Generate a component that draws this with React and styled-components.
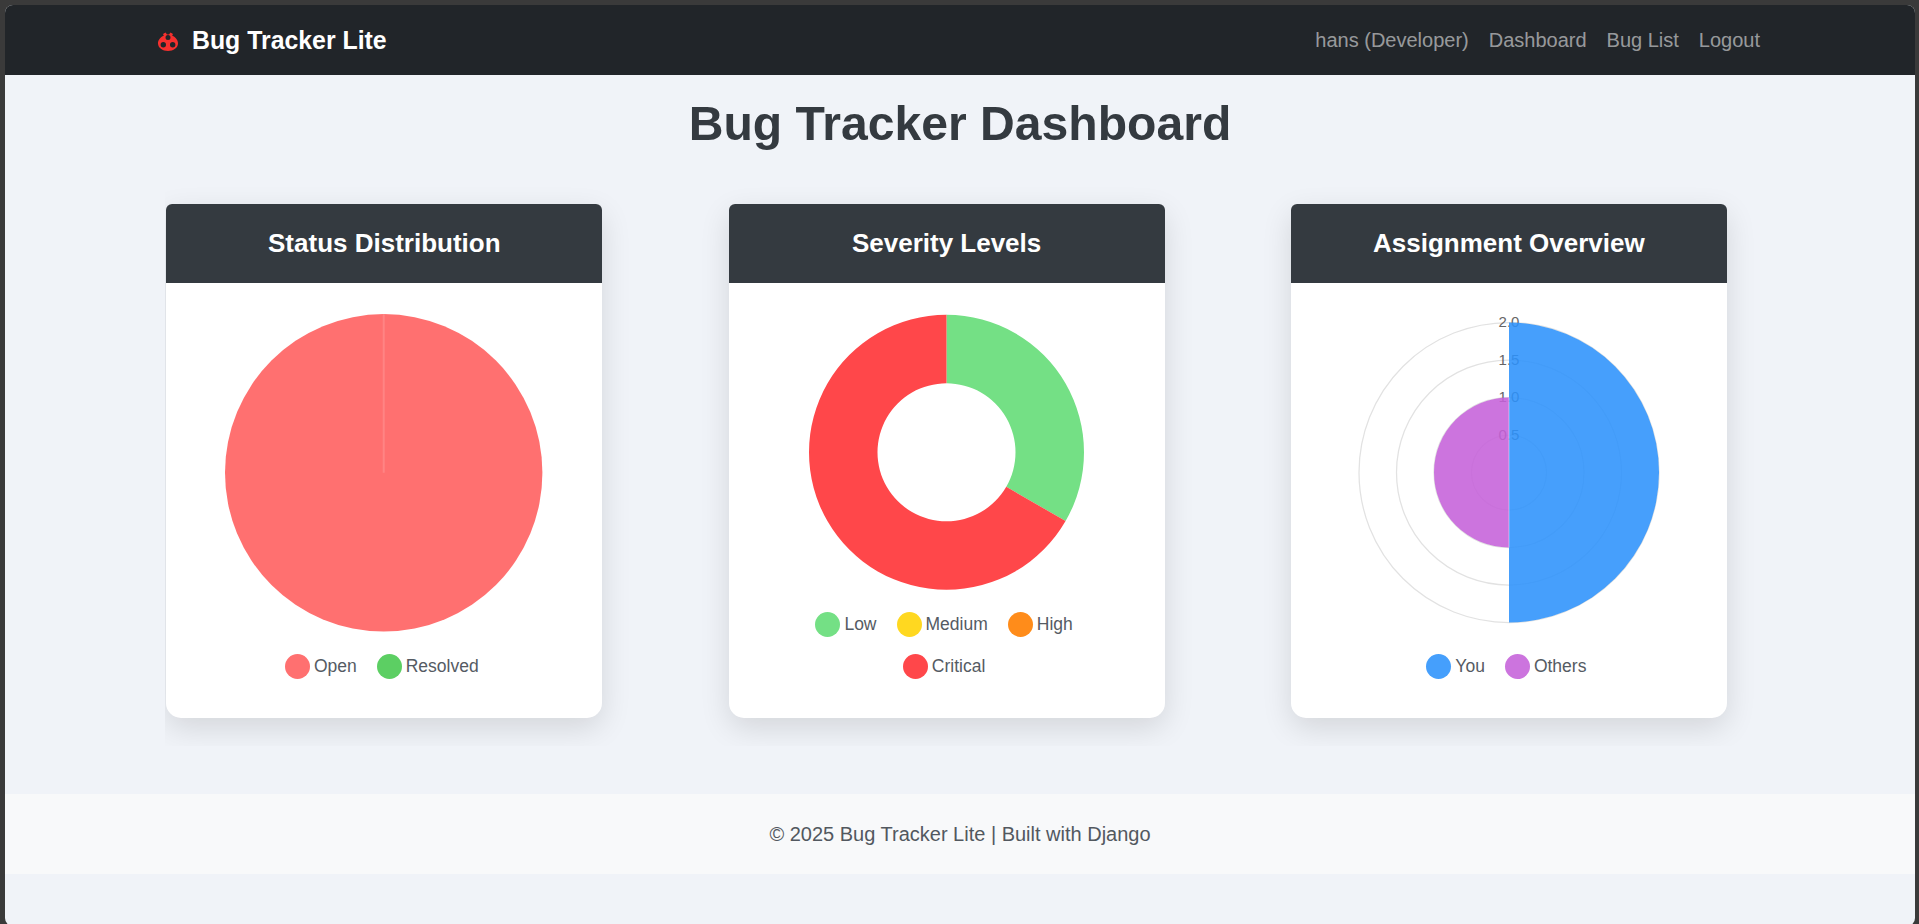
import React from "react";
import styled, { createGlobalStyle } from "styled-components";

const Global = createGlobalStyle`
  html, body { margin: 0; padding: 0; height: 100%; }
  body { background: #3a3a3a; font-family: "Liberation Sans", Arial, sans-serif; overflow: hidden; }
  #root { height: 100%; }
`;

const Frame = styled.div`
  box-sizing: border-box;
  height: 924px;
  padding: 5px 4px 0 5px;
  overflow: hidden;
`;
const Screen = styled.div`
  height: 921px;
  background: #f0f3f8;
  border-radius: 8px;
  overflow: hidden;
  display: flex;
  flex-direction: column;
`;
const Navbar = styled.nav`
  flex: none;
  height: 70px;
  background: #212529;
  display: flex;
  align-items: center;
  justify-content: space-between;
  padding: 0 155px 0 145px;
`;
const Brand = styled.a`
  display: flex;
  align-items: center;
  gap: 14px;
  padding: 1px 0 0 8px;
  color: #fff;
  font-size: 24.85px;
  font-weight: 700;
`;
const BugIcon = styled.svg`
  display: block;
  margin-top: 1px;
`;
const NavLinks = styled.div`
  display: flex;
  gap: 20px;
`;
const NavLink = styled.a`
  color: rgba(255, 255, 255, 0.55);
  font-size: 20px;
`;
const Title = styled.h1`
  margin: 0;
  padding-top: 18px;
  height: 111px;
  box-sizing: border-box;
  flex: none;
  text-align: center;
  color: #343a40;
  font-size: 48.1px;
  line-height: 60px;
  font-weight: 700;
`;
const ChartRow = styled.section`
  flex: none;
  margin: 0 0 48px 160px;
  width: 1590px;
  padding: 18px 0 26px 1.3px;
  box-sizing: border-box;
  height: 560px;
  display: flex;
  gap: 126.3px;
  overflow: hidden;
`;
const Card = styled.article`
  flex: none;
  width: 436px;
  height: 514px;
  background: #fff;
  border-radius: 6px 6px 15px 15px;
  box-shadow: 0 10px 30px rgba(0, 0, 0, 0.12);
  overflow: hidden;
`;
const CardHeader = styled.h2`
  margin: 0;
  height: 79px;
  background: #343a40;
  color: #fff;
  font-size: 26px;
  font-weight: 700;
  display: flex;
  align-items: center;
  justify-content: center;
`;
const CardBody = styled.div`
  position: relative;
  height: 435px;
`;
const ChartSvg = styled.svg`
  display: block;
  width: 436px;
  height: 435px;
`;
const Legend = styled.div`
  position: absolute;
  left: 0;
  right: 5px;
  top: ${(p) => p.$top}px;
  display: flex;
  flex-direction: column;
  align-items: center;
  gap: 16px;
`;
const LegendRow = styled.div`
  display: flex;
  gap: 20px;
`;
const LegendItem = styled.div`
  display: flex;
  align-items: center;
  gap: 4px;
  height: 26px;
  color: #555b63;
  font-size: 17.5px;
  white-space: nowrap;
`;
const Swatch = styled.i`
  width: 25px;
  height: 25px;
  border-radius: 50%;
  background: ${(p) => p.$color};
`;
const Footer = styled.footer`
  flex: none;
  height: 80px;
  background: #f8f9fa;
  color: #52585f;
  font-size: 20px;
  display: flex;
  align-items: center;
  justify-content: center;
`;
const Tick = styled.text`
  font-family: "Liberation Sans", Arial, sans-serif;
  font-size: 15px;
  fill: #666;
  text-anchor: middle;
  dominant-baseline: central;
`;

function LadyBug() {
  return (
    <BugIcon width="20" height="19" viewBox="0 0 20 19" aria-hidden="true">
      <path
        fill="#f5302e"
        fillRule="evenodd"
        d="M5 2 7.500.5 9 2.500h2L12.500.5 15 2l-.8 1.800C17.800 5.200 20 8.300 20 11.500 20 15.800 15.500 19 10 19S0 15.800 0 11.500C0 8.300 2.200 5.200 5.800 3.800ZM10 3a2.500 2.500 0 1 0 0 5 2.500 2.500 0 0 0 0-5ZM5.300 10a2.700 2.700 0 1 0 0 5.400 2.700 2.700 0 0 0 0-5.400Zm9.400 0a2.700 2.700 0 1 0 0 5.400 2.700 2.700 0 0 0 0-5.400Z"
      />
    </BugIcon>
  );
}

const polar = (cx, cy, r, deg) => {
  const a = ((deg - 90) * Math.PI) / 180;
  return [cx + r * Math.cos(a), cy + r * Math.sin(a)];
};
const ring = (cx, cy, r, r0, from, to) => {
  const [ax, ay] = polar(cx, cy, r, from);
  const [bx, by] = polar(cx, cy, r, to);
  const [cx0, cy0] = polar(cx, cy, r0, to);
  const [dx, dy] = polar(cx, cy, r0, from);
  const large = to - from > 180 ? 1 : 0;
  return `M${ax} ${ay}A${r} ${r} 0 ${large} 1 ${bx} ${by}L${cx0} ${cy0}A${r0} ${r0} 0 ${large} 0 ${dx} ${dy}Z`;
};

const Item = ({ color, label }) => (
  <LegendItem>
    <Swatch $color={color} />
    {label}
  </LegendItem>
);

function StatusChart() {
  return (
    <CardBody>
      <ChartSvg viewBox="0 0 436 435">
        <circle cx="217.700" cy="189.800" r="158.700" fill="#ff7070" />
        <line x1="217.700" y1="31" x2="217.700" y2="189.800" stroke="#ff8484" strokeWidth="2" />
      </ChartSvg>
      <Legend $top={370}>
        <LegendRow>
          <Item color="#ff7070" label="Open" />
          <Item color="#5ccf63" label="Resolved" />
        </LegendRow>
      </Legend>
    </CardBody>
  );
}

function SeverityChart() {
  const cx = 217.5, cy = 169.300, r = 137.500, r0 = 69;
  return (
    <CardBody>
      <ChartSvg viewBox="0 0 436 435">
        <path d={ring(cx, cy, r, r0, 0, 120)} fill="#74e085" />
        <path d={ring(cx, cy, r, r0, 120, 360)} fill="#ff474a" />
      </ChartSvg>
      <Legend $top={328}>
        <LegendRow>
          <Item color="#74e085" label="Low" />
          <Item color="#ffd820" label="Medium" />
          <Item color="#ff8c1a" label="High" />
        </LegendRow>
        <LegendRow>
          <Item color="#ff474a" label="Critical" />
        </LegendRow>
      </Legend>
    </CardBody>
  );
}

function AssignmentChart() {
  const cx = 218, cy = 189.500;
  return (
    <CardBody>
      <ChartSvg viewBox="0 0 436 435">
        {[37.5, 75, 112.5, 150].map((r) => (
          <circle key={r} cx={cx} cy={cy} r={r} fill="none" stroke="#e2e2e2" strokeWidth="1.250" />
        ))}
        {[["2.0", 150], ["1.5", 112.5], ["1.0", 75], ["0.5", 37.5]].map(([t, r]) => (
          <Tick key={t} x={cx} y={cy - r - 1}>{t}</Tick>
        ))}
        <path d={`M${cx} ${cy - 150}A150 150 0 0 1 ${cx} ${cy + 150}Z`} fill="#2c92fc" fillOpacity="0.88" />
        <path d={`M${cx} ${cy + 75}A75 75 0 0 1 ${cx} ${cy - 75}Z`} fill="#c561da" fillOpacity="0.88" />
        <line x1={cx} y1={cy - 75} x2={cx} y2={cy + 75} stroke="#fff" strokeOpacity="0.35" strokeWidth="1.250" />
      </ChartSvg>
      <Legend $top={370}>
        <LegendRow>
          <Item color="#459ffc" label="You" />
          <Item color="#cc74de" label="Others" />
        </LegendRow>
      </Legend>
    </CardBody>
  );
}

export default function App() {
  return (
    <Frame>
      <Global />
      <Screen>
        <Navbar>
          <Brand>
            <LadyBug />
            Bug Tracker Lite
          </Brand>
          <NavLinks>
            <NavLink>hans (Developer)</NavLink>
            <NavLink>Dashboard</NavLink>
            <NavLink>Bug List</NavLink>
            <NavLink>Logout</NavLink>
          </NavLinks>
        </Navbar>
        <Title>Bug Tracker Dashboard</Title>
        <ChartRow>
          <Card>
            <CardHeader>Status Distribution</CardHeader>
            <StatusChart />
          </Card>
          <Card>
            <CardHeader>Severity Levels</CardHeader>
            <SeverityChart />
          </Card>
          <Card>
            <CardHeader>Assignment Overview</CardHeader>
            <AssignmentChart />
          </Card>
        </ChartRow>
        <Footer>© 2025 Bug Tracker Lite | Built with Django</Footer>
      </Screen>
    </Frame>
  );
}
